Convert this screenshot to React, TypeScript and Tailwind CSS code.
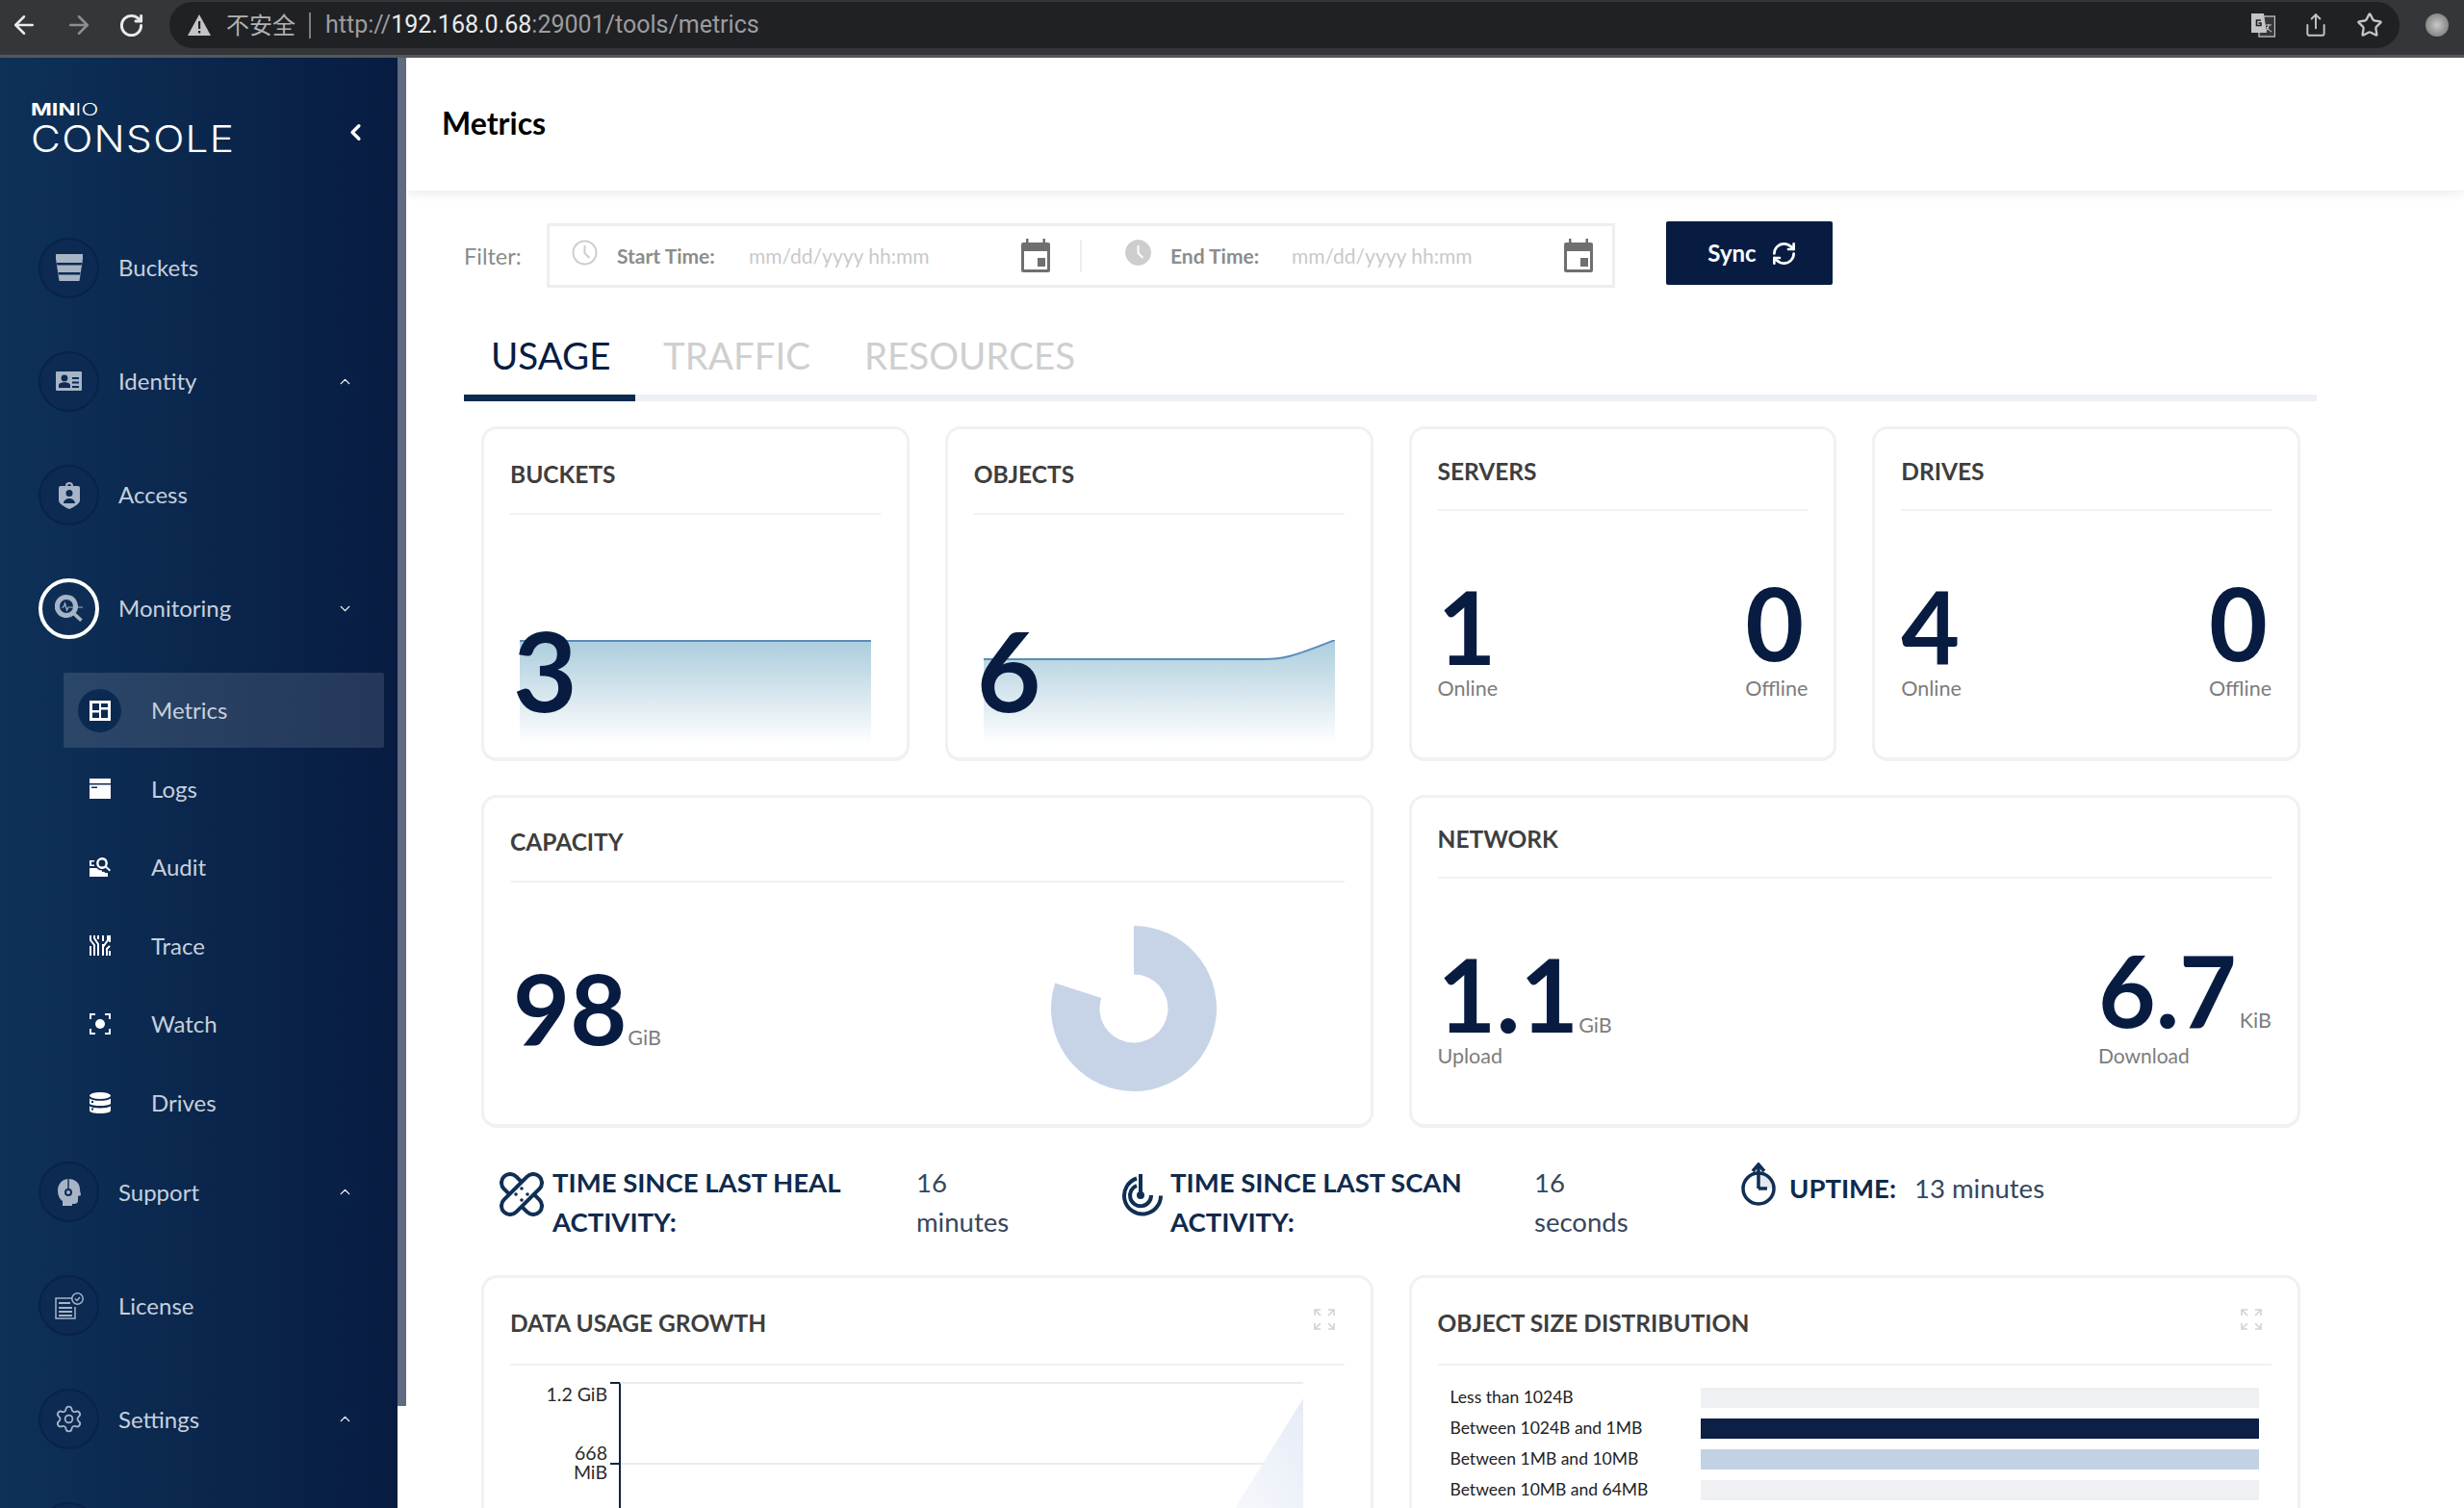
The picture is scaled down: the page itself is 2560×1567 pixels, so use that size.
import React from 'react';
import { ArrowLeft, ArrowRight, RotateCw, Share, Star, RefreshCw, Settings, ChevronLeft, ChevronUp, ChevronDown } from 'lucide-react';

const NAVY = '#081c42';

const BucketIcon = () => (
  <svg width="28" height="28" viewBox="0 0 28 28">
    <path fill="currentColor" d="M0 0h28v5l-3.500 23h-21L0 5z" />
    <path fill="#0c2a52" d="M1 9h26l-.4 2.400H1.400zM2.500 19h23l-.4 2.400H2.900z" />
  </svg>
);
const IdentityIcon = () => (
  <svg width="27" height="20" viewBox="0 0 27 20">
    <path fill="currentColor" fillRule="evenodd" d="M1 0h25a1 1 0 0 1 1 1v18a1 1 0 0 1-1 1H1a1 1 0 0 1-1-1V1a1 1 0 0 1 1-1zm8 3.500a3.400 3.400 0 1 0 0 6.800 3.400 3.400 0 0 0 0-6.800zM3 17h12v-2.500c0-2-3-3.200-6-3.200s-6 1.200-6 3.200zm14-11v2h7V6zm0 4.500v2h7v-2zm0 4.500v2h7v-2z" />
  </svg>
);
const AccessIcon = () => (
  <svg width="22" height="30" viewBox="0 0 22 30">
    <path fill="currentColor" fillRule="evenodd" d="M7 6a4 4 0 0 1 8 0h5a2 2 0 0 1 2 2v13c0 3-6 7-11 9C6 28 0 24 0 21V8a2 2 0 0 1 2-2zm2 0h4a2 2 0 0 0-4 0zm2 4a3.500 3.500 0 1 0 0 7 3.500 3.500 0 0 0 0-7zm-6 14h12c0-3-3-5-6-5s-6 2-6 5z" />
  </svg>
);
const MonitoringIcon = () => (
  <svg width="30" height="28" viewBox="0 0 30 28">
    <path fill="currentColor" d="M12 0a12 12 0 0 1 9.800 18.900l7 6.500-2.600 2.600-7-6.600A12 12 0 1 1 12 0zm0 5a7 7 0 1 0 0 14 7 7 0 0 0 0-14z" />
    <path fill="none" stroke="currentColor" strokeWidth="1.200" d="M7 13h2l1.500-4 2 7 1.500-3h15" />
  </svg>
);
const MetricsIcon = () => (
  <svg width="22" height="21" viewBox="0 0 22 21">
    <path fill="#fff" fillRule="evenodd" d="M0 0h22v21H0zm3 3v7h7V3zm9 0v4h7V3zm0 6.500V18h7V9.500zM3 12.500V18h7v-5.500z" />
  </svg>
);
const LogsIcon = () => (
  <svg width="22" height="21" viewBox="0 0 22 21">
    <path fill="#fff" fillRule="evenodd" d="M0 0h22v5H0zm0 6.500h22V21H0zm2 2v1.500h6V8.500z" />
  </svg>
);
const AuditIcon = () => (
  <svg width="22" height="20" viewBox="0 0 22 20">
    <path fill="#fff" fillRule="evenodd" d="M13 0a6 6 0 0 1 5 9.300l4 3.700-1.300 1.500-4-3.700A6 6 0 1 1 13 0zm0 2.500a3.500 3.500 0 1 0 0 7 3.500 3.500 0 0 0 0-7zM0 3h5v1.500H2v3h3V9H0zm0 8h7.500c1.500 1.800 3.500 2.500 5.500 2.500V20H0zm15 3.800 1.500 1.200H19v4h-6v-5z" />
  </svg>
);
const TraceIcon = () => (
  <svg width="22" height="21" viewBox="0 0 22 21">
    <path fill="none" stroke="#fff" strokeWidth="2" d="M1 21V11M5 21V10L1 5V0M9 21V9L5 3V0M9 4V0M14 0v6M14 9v12M19 0v5l-5 7M21 0v7M18 21v-7l3-3M21 16v5" />
  </svg>
);
const WatchIcon = () => (
  <svg width="22" height="22" viewBox="0 0 22 22">
    <path fill="none" stroke="#fff" strokeWidth="2" d="M1 6V1h5M16 1h5v5M21 16v5h-5M6 21H1v-5" />
    <circle cx="11" cy="11" r="5" fill="#fff" />
  </svg>
);
const DrivesIcon = () => (
  <svg width="22" height="22" viewBox="0 0 22 22">
    <ellipse cx="11" cy="3.500" rx="11" ry="3.500" fill="#fff" />
    <path fill="#fff" fillRule="evenodd" d="M0 6.500C2 8 6 8.800 11 8.800s9-.8 11-2.300V12c-2 1.400-6 2.100-11 2.100S2 13.400 0 12zm2 2.500v2h2V9zM0 14.500c2 1.300 6 2 11 2s9-.7 11-2V19c0 1.700-5 3-11 3S0 20.700 0 19zm2 2v2h2v-2z" />
  </svg>
);
const SupportIcon = () => (
  <svg width="24" height="28" viewBox="0 0 24 28">
    <path fill="currentColor" fillRule="evenodd" d="M11 0c7 0 12 4 12 11 0 2 1 4 1 6l-3 1v5c0 2-2 3-4 3h-2v2H5v-5C2 21 0 17 0 12 0 5 5 0 11 0zm0 10a4 4 0 1 0 0 8 4 4 0 0 0 0-8zm0 2a2 2 0 1 1 0 4 2 2 0 0 1 0-4z" />
    <path fill="none" stroke="#0c2a52" strokeWidth="1.400" d="M11 0v10" />
  </svg>
);
const LicenseIcon = () => (
  <svg width="30" height="28" viewBox="0 0 30 28" fill="none" stroke="currentColor" strokeWidth="1.500">
    <path d="M18 6H1v21h20V15" />
    <path d="M4 11h12M4 16h14M4 20h14M4 24h14" strokeWidth="2" />
    <circle cx="23.500" cy="6.500" r="5.700" />
    <path d="M21 6.500l2 2 3-3.500" />
  </svg>
);
const ClockIcon = ({ solid }: { solid?: boolean }) => (
  <svg width="27" height="27" viewBox="0 0 27 27">
    <circle cx="13.500" cy="13.500" r={solid ? 13 : 12} fill={solid ? '#cdcdcd' : 'none'} stroke="#cdcdcd" strokeWidth={solid ? 1 : 2} />
    <path d="M13.500 6v8l5 5" fill="none" stroke={solid ? '#fff' : '#cdcdcd'} strokeWidth="2" />
  </svg>
);
const CalendarIcon = () => (
  <svg width="30" height="35" viewBox="0 0 30 35">
    <path fill="#6f6f6f" fillRule="evenodd" d="M5 0h2.500v4h15V0H25v4h3a2 2 0 0 1 2 2v27a2 2 0 0 1-2 2H2a2 2 0 0 1-2-2V6a2 2 0 0 1 2-2h3zM3 13v19h24V13zm14 8h7v8h-7z" />
    <rect x="17" y="20" width="8" height="9" fill="#6f6f6f" />
  </svg>
);
const ExpandIcon = () => (
  <svg width="22" height="22" viewBox="0 0 22 22" fill="none" stroke="#d2d2d2" strokeWidth="1.600">
    <path d="M1 7V1h6M1 1l6 6M21 7V1h-6M21 1l-6 6M1 15v6h6M1 21l6-6M21 15v6h-6M21 21l-6-6" />
  </svg>
);
const HealIcon = () => (
  <svg width="46" height="46" viewBox="0 0 46 46" fill="none" stroke="#0f2f55" strokeWidth="4">
    <rect x="14" y="-3" width="18" height="52" rx="9" transform="rotate(-45 23 23)" />
    <rect x="14" y="-3" width="18" height="52" rx="9" transform="rotate(45 23 23)" fill="#fff" />
    <g fill="#0f2f55" stroke="none">
      <circle cx="23" cy="17" r="1.800" /><circle cx="17" cy="23" r="1.800" /><circle cx="29" cy="23" r="1.800" /><circle cx="23" cy="29" r="1.800" />
    </g>
  </svg>
);
const ScanIcon = () => (
  <svg width="45" height="46" viewBox="0 0 45 46" fill="none" stroke="#0f2f55" strokeWidth="4">
    <path d="M22 2v22" />
    <path d="M18 6.500a19 19 0 1 0 25 18" />
    <path d="M18 14a11 11 0 1 0 15 10" />
    <circle cx="22" cy="24" r="4" fill="#0f2f55" stroke="none" />
  </svg>
);
const UptimeIcon = () => (
  <svg width="38" height="45" viewBox="0 0 38 45" fill="none" stroke="#0f2f55" strokeWidth="3.500">
    <path d="M19 27V12a15 15 0 0 1 15 15z" fill="#e4e7ed" stroke="none" />
    <circle cx="19" cy="27" r="16" />
    <path d="M19 27V3M19 27h9" />
    <path d="M13 9l6-7 6 7" />
  </svg>
);
const TranslateIcon = () => (
  <svg width="26" height="26" viewBox="0 0 26 26">
    <rect x="9" y="4" width="16.500" height="21" fill="#35363a" stroke="#c4c4c4" strokeWidth="1.300" />
    <path d="M1 1h13l3 20H1z" fill="#c4c4c4" />
    <path d="M11 8H6.500v5.500H11V11H8.500" fill="none" stroke="#202124" strokeWidth="1.600" />
    <path d="M16 13h6M19 12v1.500c0 2-2 5-4 6M17 15c1 2 3 4 5 5" fill="none" stroke="#c4c4c4" strokeWidth="1.200" />
  </svg>
);

function NavItem({ label, icon, active, chevron }: { label?: string; icon?: React.ReactNode; active?: boolean; chevron?: 'up' | 'down' }) {
  return (
    <div className="flex h-[118px] shrink-0 items-center pl-[40px] pr-[41px]">
      <div className={`flex h-[63px] w-[63px] shrink-0 items-center justify-center rounded-full text-[#a6b4c6] ${active ? 'border-[4px] border-white bg-[#0d2d55]' : 'border-2 border-[#092347] bg-[#0c2a52]'}`}>
        {icon}
      </div>
      {label && <span className="ml-[20px] text-[24px] text-[#c6d0dc]">{label}</span>}
      {chevron && (
        <span className="ml-auto flex h-[27px] w-[27px] items-center justify-center bg-[#0a2248]/60 text-white">
          {chevron === 'up' ? <ChevronUp size={17} strokeWidth={1.8} /> : <ChevronDown size={17} strokeWidth={1.8} />}
        </span>
      )}
    </div>
  );
}

function SubItem({ label, icon, active }: { label: string; icon: React.ReactNode; active?: boolean }) {
  return (
    <div className={`flex h-[78px] items-center rounded-[2px] pl-[15px] ${active ? 'bg-white/12' : ''}`}>
      <div className={`flex h-[45px] w-[45px] items-center justify-center rounded-full ${active ? 'bg-[#0b2a52]' : ''}`}>{icon}</div>
      <span className="ml-[31px] text-[24px] text-[#c6d0dc]">{label}</span>
    </div>
  );
}

function Sidebar() {
  return (
    <aside className="flex h-full w-[413px] shrink-0 flex-col overflow-hidden bg-gradient-to-r from-[#0e3158] to-[#081c42]">
      <div className="relative ml-[32px] mt-[44px] h-[115px] shrink-0 text-white">
        <div className="origin-left scale-x-[1.38] font-['Inter'] text-[17px] font-bold leading-[20px]">
          MIN<span className="font-light">IO</span>
        </div>
        <div className="-mt-[3px] origin-left scale-x-[1.1] font-['Inter'] text-[38.500px] font-light leading-[46px] tracking-[1.200px]">CONSOLE</div>
        <ChevronLeft size={27} strokeWidth={3} className="absolute left-[324px] top-[20px]" />
      </div>
      <NavItem label="Buckets" icon={<BucketIcon />} />
      <NavItem label="Identity" icon={<IdentityIcon />} chevron="up" />
      <NavItem label="Access" icon={<AccessIcon />} />
      <NavItem label="Monitoring" icon={<MonitoringIcon />} active chevron="down" />
      <div className="-mb-[5px] ml-[66px] mr-[14px] mt-[8px] flex shrink-0 flex-col gap-[3.600px]">
        <SubItem label="Metrics" icon={<MetricsIcon />} active />
        <SubItem label="Logs" icon={<LogsIcon />} />
        <SubItem label="Audit" icon={<AuditIcon />} />
        <SubItem label="Trace" icon={<TraceIcon />} />
        <SubItem label="Watch" icon={<WatchIcon />} />
        <SubItem label="Drives" icon={<DrivesIcon />} />
      </div>
      <NavItem label="Support" icon={<SupportIcon />} chevron="up" />
      <NavItem label="License" icon={<LicenseIcon />} />
      <NavItem label="Settings" icon={<Settings size={31} strokeWidth={1.4} />} chevron="up" />
      <NavItem />
    </aside>
  );
}

function BrowserBar() {
  return (
    <div className="flex h-[60px] shrink-0 items-start border-b-[3px] border-[#55575b] bg-[#35363a] pt-[2px] font-['Roboto']">
      <div className="flex h-[48px] w-[176px] shrink-0 items-center pl-[10px] text-[#e8eaed]">
        <ArrowLeft size={30} strokeWidth={2} />
        <ArrowRight size={30} strokeWidth={2} className="ml-[27px] text-[#8d8e91]" />
        <RotateCw size={27} strokeWidth={2.6} className="ml-[26px]" />
      </div>
      <div className="flex h-[48px] flex-1 items-center rounded-full bg-[#202124] pl-[18px] pr-[17px]">
        <svg width="26" height="24" viewBox="0 0 26 24" className="shrink-0">
          <path d="M13 1l12 22H1z" fill="#c4c4c4" />
          <path d="M12 8h2.200v8H12zM12 18h2.200v2.500H12z" fill="#202124" />
        </svg>
        <span className="mb-[3px] ml-[15px] font-['Noto_Sans_CJK_SC'] text-[24px] text-[#b0b1b3]">不安全</span>
        <span className="ml-[14px] h-[27px] w-[2px] bg-[#7d7e80]" />
        <span className="ml-[15px] text-[25px] text-[#9c9d9f]">
          http://<span className="text-[#e8eaed]">192.168.0.68</span>:29001/tools/metrics
        </span>
        <div className="ml-auto flex items-center gap-[29px] text-[#c4c4c4]">
          <TranslateIcon />
          <Share size={26} strokeWidth={1.8} />
          <Star size={28} strokeWidth={2} />
        </div>
      </div>
      <div className="flex h-[48px] w-[67px] shrink-0 items-center justify-end pr-[16px]">
        <div className="h-[24px] w-[24px] rounded-full bg-radial from-[#c9c9c9] to-[#6d6d6d]" />
      </div>
    </div>
  );
}

function TimeField({ label, solid, labelWidth }: { label: string; solid?: boolean; labelWidth: string }) {
  return (
    <div className="flex items-center">
      <div className="-mt-[7px]"><ClockIcon solid={solid} /></div>
      <span className={`ml-[20px] text-[21px] font-bold text-[#8c8c8c] ${labelWidth}`}>{label}</span>
      <span className="w-[283px] text-[21px] text-[#c9c9c9]">mm/dd/yyyy hh:mm</span>
      <CalendarIcon />
    </div>
  );
}

function FilterRow() {
  return (
    <div className="ml-[60px] mt-[34px] flex items-start">
      <span className="mt-[19px] w-[86px] text-[23.500px] leading-[30px] text-[#8a8a8a]">Filter:</span>
      <div className="flex h-[67px] w-[1110px] items-center border-[3px] border-[#eeeeee]">
        <div className="flex items-center pl-[23px]">
          <TimeField label="Start Time:" labelWidth="w-[137px]" />
        </div>
        <span className="ml-[31px] h-[34px] w-[2px] bg-[#eeeeee]" />
        <div className="flex items-center pl-[45px]">
          <TimeField label="End Time:" solid labelWidth="w-[126px]" />
        </div>
      </div>
      <div className="-mt-[2px] ml-[53px] flex h-[66px] w-[173px] items-center justify-center gap-[15px] rounded-[2px] bg-[#081c42] pl-[6px] text-[24px] font-bold text-white">
        Sync <RefreshCw size={27} strokeWidth={2.4} />
      </div>
    </div>
  );
}

function Tabs() {
  return (
    <div className="ml-[60px] mt-[41px] flex h-[77px] w-[1925px] border-b-[7px] border-[#edf0f4] text-[38.500px] leading-[58px]">
      <div className="-mb-[7px] h-[77px] w-[178px] border-b-[7px] border-[#0c2a50] pl-[28px] text-[#081c42]">USAGE</div>
      <div className="ml-[29px] text-[#cfcfcf]">TRAFFIC</div>
      <div className="ml-[56px] text-[#cfcfcf]">RESOURCES</div>
    </div>
  );
}

function Card({ title, header, className, expand, children }: { title: string; header: string; className: string; expand?: boolean; children?: React.ReactNode }) {
  return (
    <div className={`flex flex-col rounded-[16px] border-[3px] border-b-[4px] border-[#f0f1f4] bg-white px-[27px] ${className}`}>
      <div className={`relative shrink-0 border-b-2 border-[#f1f1f3] text-[24.500px] font-bold leading-[30px] text-[#3e3e3e] ${header}`}>
        {title}
        {expand && <span className="absolute right-[10px] top-[32px]"><ExpandIcon /></span>}
      </div>
      {children}
    </div>
  );
}

function Trend({ d, line }: { d: string; line: string }) {
  return (
    <svg width="365" height="109" viewBox="0 0 365 109" className="ml-[10px] mt-[130px]">
      <defs>
        <linearGradient id={`fade-${d.length}`} x1="0" y1="0" x2="0" y2="1">
          <stop offset="0" stopColor="#accddd" />
          <stop offset="1" stopColor="#ffffff" />
        </linearGradient>
      </defs>
      <path d={d} fill={`url(#fade-${d.length})`} />
      <path d={line} fill="none" stroke="#5a8cb9" strokeWidth="2" />
    </svg>
  );
}

function Count({ value }: { value: string }) {
  return <span className="absolute left-[3px] top-[103px] text-[115px] font-bold leading-none text-[#081c42]">{value}</span>;
}

function Tally({ value, label, right }: { value: string; label: string; right?: boolean }) {
  return (
    <div className={`flex flex-col ${right ? 'items-end' : 'items-start'}`}>
      <span className={`text-[105px] font-bold leading-[104px] text-[#081c42] ${right ? 'mb-[4px] mr-[4px]' : ''}`}>{value}</span>
      <span className="text-[21.500px] leading-[26px] text-[#7c7c7c]">{label}</span>
    </div>
  );
}

function StatusCard({ title, online }: { title: string; online: string }) {
  return (
    <Card title={title} header="h-[85px] pt-[29px]" className="h-[348px]">
      <div className="mt-[63px] flex items-end justify-between">
        <Tally value={online} label="Online" />
        <Tally value="0" label="Offline" right />
      </div>
    </Card>
  );
}

function Stat({ label, second, value, unit, icon, iconCol, className }: { label: string; second: string; value: string; unit: string; icon: React.ReactNode; iconCol: string; className: string }) {
  return (
    <div className={`flex items-start text-[27.500px] leading-[41px] ${className}`}>
      <div className={`mt-[10px] flex shrink-0 ${iconCol}`}>{icon}</div>
      <div className="w-[378px] shrink-0 font-bold text-[#0f2a4c]">{label}<br />{second}</div>
      <div className="text-[#36465c]">{value}<br />{unit}</div>
    </div>
  );
}

const sizes = [
  { label: 'Less than 1024B', color: 'bg-[#eef0f3]' },
  { label: 'Between 1024B and 1MB', color: 'bg-[#0c1f45]' },
  { label: 'Between 1MB and 10MB', color: 'bg-[#c3d1e5]' },
  { label: 'Between 10MB and 64MB', color: 'bg-[#eef0f3]' },
];

function Dashboard() {
  return (
    <div className="ml-[78px] mt-[26px] w-[1890px]">
      <div className="grid grid-cols-4 gap-x-[37px]">
        <Card title="BUCKETS" header="h-[89px] pt-[32px]" className="h-[348px]">
          <div className="relative">
            <Trend d="M0 1H365V109H0z" line="M0 1H365" />
            <Count value="3" />
          </div>
        </Card>
        <Card title="OBJECTS" header="h-[89px] pt-[32px]" className="h-[348px]">
          <div className="relative">
            <Trend d="M0 20H290C310 20 320 18 365 0V109H0z" line="M0 20H290C310 20 320 18 365 0" />
            <Count value="6" />
          </div>
        </Card>
        <StatusCard title="SERVERS" online="1" />
        <StatusCard title="DRIVES" online="4" />
      </div>

      <div className="mt-[35px] grid grid-cols-2 gap-x-[37px]">
        <Card title="CAPACITY" header="h-[88px] pt-[31px]" className="h-[346px]">
          <div className="mt-[45px] flex items-start">
            <div className="ml-[3px] mt-[34px] flex items-baseline">
              <span className="text-[102px] font-bold leading-none text-[#081c42]">98</span>
              <span className="ml-[1px] text-[21.500px] text-[#7c7c7c]">GiB</span>
            </div>
            <svg width="172" height="172" viewBox="0 0 172 172" className="ml-auto mr-[133px]">
              <path fill="#c7d4e8" d="M86 0A86 86 0 1 1 4.200 59.400L52.200 75A35.500 35.500 0 1 0 86 50.500z" />
            </svg>
          </div>
        </Card>
        <Card title="NETWORK" header="h-[84px] pt-[28px]" className="h-[346px]">
          <div className="mt-[63px] flex items-end justify-between">
            <div className="flex flex-col">
              <div className="flex items-baseline">
                <span className="text-[105px] font-bold leading-[104px] text-[#081c42]">1.1</span>
                <span className="text-[21.500px] text-[#7c7c7c]">GiB</span>
              </div>
              <span className="text-[21.500px] leading-[26px] text-[#7c7c7c]">Upload</span>
            </div>
            <div className="flex flex-col">
              <div className="mb-[4px] flex items-baseline">
                <span className="text-[103px] font-bold leading-[104px] text-[#081c42]">6.7</span>
                <span className="ml-[3px] text-[21.500px] text-[#7c7c7c]">KiB</span>
              </div>
              <span className="text-[21px] leading-[26px] text-[#7c7c7c]">Download</span>
            </div>
          </div>
        </Card>
      </div>

      <div className="flex h-[153px] pt-[36px]">
        <Stat className="ml-[19px] w-[644px]" iconCol="w-[55px]" label="TIME SINCE LAST HEAL" second="ACTIVITY:" value="16" unit="minutes" icon={<HealIcon />} />
        <Stat className="w-[645px]" iconCol="w-[53px]" label="TIME SINCE LAST SCAN" second="ACTIVITY:" value="16" unit="seconds" icon={<ScanIcon />} />
        <div className="flex items-start text-[27.500px]">
          <UptimeIcon />
          <span className="ml-[13px] mt-[6px] font-bold text-[#0f2a4c]">UPTIME:</span>
          <span className="ml-[19px] mt-[6px] text-[#36465c]">13 minutes</span>
        </div>
      </div>

      <div className="grid grid-cols-2 gap-x-[37px]">
        <Card title="DATA USAGE GROWTH" header="h-[91px] pt-[32px]" expand className="h-[400px]">
          <div className="relative ml-[113px] mt-[17px] h-[140px] w-[711px] border-l-2 border-t-2 border-l-[#0c2347] border-t-[#ececec]">
            <div className="absolute left-0 top-[82px] h-[2px] w-full bg-[#ececec]" />
            <svg width="72" height="116" viewBox="0 0 72 116" className="absolute right-0 top-[15px]">
              <defs>
                <linearGradient id="growth" x1="1" y1="0" x2="0" y2="1">
                  <stop offset="0" stopColor="#e6ecf6" />
                  <stop offset="1" stopColor="#f6f8fc" />
                </linearGradient>
              </defs>
              <path d="M72 0V116H0z" fill="url(#growth)" />
            </svg>
            <span className="absolute -left-[11px] -top-[2px] h-[2px] w-[10px] bg-[#0c2347]" />
            <span className="absolute -left-[11px] top-[82px] h-[2px] w-[10px] bg-[#0c2347]" />
            <span className="absolute -left-[120px] top-[0px] w-[106px] text-right text-[19.500px] leading-[22px] text-[#2a2a2a]">1.2 GiB</span>
            <span className="absolute -left-[120px] top-[62px] w-[106px] text-right text-[19.500px] leading-[20px] text-[#2a2a2a]">668<br />MiB</span>
          </div>
        </Card>
        <Card title="OBJECT SIZE DISTRIBUTION" header="h-[91px] pt-[32px]" expand className="h-[400px]">
          <div className="ml-[13px] mt-[23px] flex flex-col gap-[11px]">
            {sizes.map(s => (
              <div key={s.label} className="flex h-[21px] items-center">
                <span className="w-[260px] text-[17.500px] text-[#222222]">{s.label}</span>
                <span className={`h-[21px] w-[580px] ${s.color}`} />
              </div>
            ))}
          </div>
        </Card>
      </div>
    </div>
  );
}

export default function App() {
  return (
    <div className="flex h-[1567px] w-[2560px] flex-col overflow-hidden bg-white font-['Lato',sans-serif]" style={{ color: NAVY }}>
      <BrowserBar />
      <div className="flex min-h-0 flex-1">
        <Sidebar />
        <div className="h-[1401px] w-[9px] shrink-0 bg-[#5f6b80]" />
        <main className="min-w-0 flex-1 overflow-hidden">
          <div className="flex h-[138px] items-center pl-[37px] pb-[2px] text-[32px] font-bold text-black shadow-[0_4px_10px_rgba(0,0,0,0.07)]">
            Metrics
          </div>
          <FilterRow />
          <Tabs />
          <Dashboard />
        </main>
      </div>
    </div>
  );
}
